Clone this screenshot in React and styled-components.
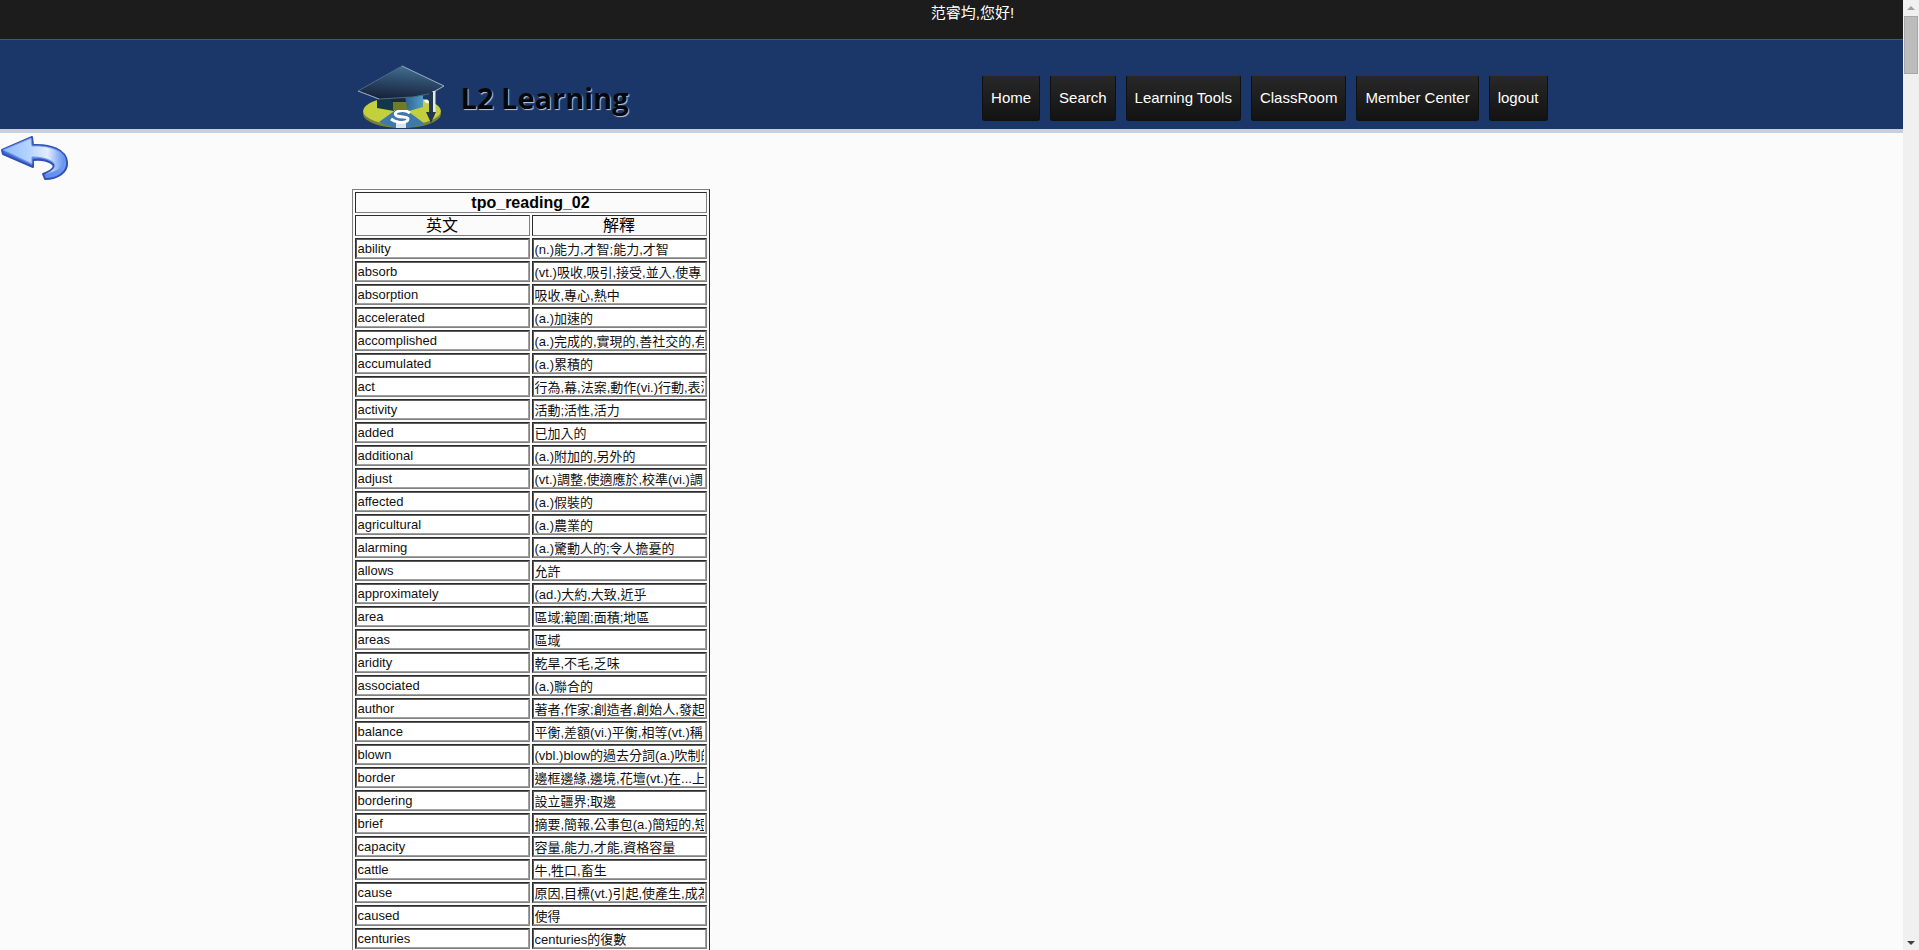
import React from "react";
import styled, { createGlobalStyle } from "styled-components";

const GlobalStyle = createGlobalStyle`
  * {
    box-sizing: border-box;
  }
  body {
    margin: 0;
    font-family: "Liberation Sans", "Noto Sans CJK TC", sans-serif;
    font-size: 16px;
    color: #000;
    background-color: #fbfbfc;
  }
`;

const Window = styled.div`
  display: flex;
  height: 100vh;
  overflow: hidden;
`;

const Page = styled.div`
  flex: 1;
  min-width: 0;
  overflow: hidden;
`;

const TopBar = styled.div`
  height: 39px;
  padding: 3px 0 0 42px;
  font-size: 15px;
  line-height: 20px;
  text-align: center;
  color: white;
  background-color: #1c1c1c;
`;

const Header = styled.header`
  height: 94px;
  border-top: 1px solid #3c5688;
  border-bottom: 4px solid #c9d0dc;
  background-color: #1b3668;
`;

const Container = styled.div`
  width: 100%;
  max-width: 1200px;
  margin: 0 auto;
`;

const HeaderInner = styled(Container)`
  display: flex;
  justify-content: space-between;
  align-items: flex-start;
`;

const Logo = styled.a`
  display: flex;
  align-items: center;
  margin-top: 24px;
  padding-left: 5px;
  gap: 16px;
  color: #05070c;
  text-decoration: none;
  font-family: "Open Sans", sans-serif;
  font-size: 29px;
  font-weight: 700;
  line-height: 64px;
  text-shadow: 1px 1px 1px #c3cbdb;
`;

const LogoText = styled.span`
  padding-top: 2px;
`;

const Menu = styled.nav`
  display: flex;
  gap: 10px;
  margin: 35px 4px 0 0;
`;

const MenuLink = styled.a`
  height: 46px;
  padding: 0 8px;
  border: 1px solid #101010;
  border-top-color: #333;
  border-radius: 3px;
  font-size: 15px;
  line-height: 44px;
  color: white;
  text-decoration: none;
  white-space: nowrap;
  background-image: linear-gradient(#282828, #131313);
`;

const BackButton = styled.button`
  display: block;
  margin-bottom: 3px;
  padding: 0;
  border: none;
  background: none;
  cursor: pointer;
`;

const WordTable = styled.table`
  width: 358px;
  border: 1px solid #808080;
  border-right-color: #2c2c2c;
  border-bottom-color: #2c2c2c;
  border-spacing: 2px;
  table-layout: fixed;
`;

const HeadCell = styled.th`
  height: 21px;
  padding: 0;
  border: 1px solid #2c2c2c;
  border-right-color: #808080;
  border-bottom-color: #808080;
  line-height: 19px;
  font-weight: ${(props) => (props.$bold ? 700 : 400)};
`;

const WordCell = styled.td`
  height: 21px;
  padding: 0;
  border: 1px solid #2c2c2c;
  border-right-color: #808080;
  border-bottom-color: #808080;
`;

const WordInput = styled.input`
  display: block;
  width: 100%;
  height: 19px;
  padding: 0 1px;
  border: 1px solid #5c5c5c;
  border-right-color: #a0a0a0;
  border-bottom-color: #a0a0a0;
  font-family: inherit;
  font-size: 13px;
  color: #111;
  background-color: white;
`;

const ScrollBar = styled.div`
  display: flex;
  flex-direction: column;
  align-items: center;
  width: 16px;
  background-color: #f0f0f0;
`;

const ScrollArrow = styled.svg`
  display: block;
  width: 16px;
  height: 16px;
`;

const ScrollThumb = styled.div`
  width: 14px;
  height: 58px;
  border: 1px solid #a8a8a8;
  background-color: #bcbcbc;
`;

const Spacer = styled.div`
  flex: 1;
`;

const menus = [
  "Home",
  "Search",
  "Learning Tools",
  "ClassRoom",
  "Member Center",
  "logout",
];

const words = [
  ["ability", "(n.)能力,才智;能力,才智"],
  ["absorb", "(vt.)吸收,吸引,接受,並入,使專"],
  ["absorption", "吸收,專心,熱中"],
  ["accelerated", "(a.)加速的"],
  ["accomplished", "(a.)完成的,實現的,善社交的,有"],
  ["accumulated", "(a.)累積的"],
  ["act", "行為,幕,法案,動作(vi.)行動,表演"],
  ["activity", "活動;活性,活力"],
  ["added", "已加入的"],
  ["additional", "(a.)附加的,另外的"],
  ["adjust", "(vt.)調整,使適應於,校準(vi.)調"],
  ["affected", "(a.)假裝的"],
  ["agricultural", "(a.)農業的"],
  ["alarming", "(a.)驚動人的;令人擔憂的"],
  ["allows", "允許"],
  ["approximately", "(ad.)大約,大致,近乎"],
  ["area", "區域;範圍;面積;地區"],
  ["areas", "區域"],
  ["aridity", "乾旱,不毛,乏味"],
  ["associated", "(a.)聯合的"],
  ["author", "著者,作家;創造者,創始人,發起"],
  ["balance", "平衡,差額(vi.)平衡,相等(vt.)稱"],
  ["blown", "(vbl.)blow的過去分詞(a.)吹制的"],
  ["border", "邊框邊緣,邊境,花壇(vt.)在...上"],
  ["bordering", "設立疆界;取邊"],
  ["brief", "摘要,簡報,公事包(a.)簡短的,短"],
  ["capacity", "容量,能力,才能,資格容量"],
  ["cattle", "牛,牲口,畜生"],
  ["cause", "原因,目標(vt.)引起,使產生,成為"],
  ["caused", "使得"],
  ["centuries", "centuries的復數"],
];

const LogoIcon = () => (
  <svg width="88" height="64" viewBox="0 0 88 64" aria-hidden="true">
    <defs>
      <linearGradient id="cap" x1="0.6" y1="0" x2="0.4" y2="1">
        <stop offset="0" stopColor="#44708f" />
        <stop offset="0.5" stopColor="#2b4666" />
        <stop offset="1" stopColor="#172238" />
      </linearGradient>
      <linearGradient id="band" x1="0" y1="0" x2="1" y2="0">
        <stop offset="0" stopColor="#2b6590" />
        <stop offset="1" stopColor="#529bc4" />
      </linearGradient>
    </defs>
    <ellipse cx="45" cy="49" rx="39" ry="14" fill="#75823a" />
    <ellipse cx="45" cy="46" rx="39" ry="14" fill="#c3cf3c" />
    <path d="M40 44 L22 57 Q42 67 68 59 L48 44Z" fill="#3d79ab" />
    <path d="M39 56h10v7H39z" fill="#d9e5ee" />
    <path
      d="M53 48C46 43 34 47 40 51C45 53 54 51 50 56C45 59 38 57 34 54"
      fill="none"
      stroke="#fff"
      strokeWidth="3"
    />
    <path d="M20 28v15l17 3V31z" fill="#123747" />
    <path d="M36 34h15v11H36z" fill="#737a25" />
    <path d="M34 31h18v6H34z" fill="#1b2b35" />
    <path d="M48 31l18-3v14l-14 4-2-3z" fill="url(#band)" />
    <path
      d="M1 26L45 1L87 21L76 28L56 32L22 34Z"
      fill="url(#cap)"
      stroke="#4d6a88"
      strokeWidth="1"
    />
    <path d="M45 1L87 21L76 27" fill="none" stroke="#91a4b8" />
    <path d="M1 26L22 34" fill="none" stroke="#91a4b8" />
    <path d="M77 26v24" stroke="#e1e8ee" strokeWidth="3" />
    <path d="M72 27h4v20h3l-5 11-5-11h3z" fill="#24384d" />
    <path d="M67 35q5-2 5 3-4 1-5-3z" fill="#f3f5f8" />
  </svg>
);

const BackIcon = () => (
  <svg width="70" height="50" viewBox="0 0 70 50" aria-hidden="true">
    <defs>
      <linearGradient id="arrow" x1="0" y1="0" x2="1" y2="0">
        <stop offset="0" stopColor="#8fbcff" />
        <stop offset="0.4" stopColor="#b3d2ff" />
        <stop offset="0.72" stopColor="#e2eeff" />
        <stop offset="1" stopColor="#5c8df0" />
      </linearGradient>
      <linearGradient id="side" x1="0" y1="0" x2="1" y2="0">
        <stop offset="0" stopColor="#3b66e0" />
        <stop offset="1" stopColor="#6f9cf5" />
      </linearGradient>
    </defs>
    <path
      d="M2 17L32 4L33 12C51 11 66 17 67 29C68 39 58 46 45 46L43 41C52 38 57 33 51 30C46 27 40 26 33 27V34L3 21Z"
      fill="url(#side)"
      stroke="#3350b4"
      strokeWidth="2"
      strokeLinejoin="round"
    />
    <path
      d="M3 17L31 5L32 13C50 12 64 18 65 26C65 34 57 39 46 41C54 37 58 32 51 28C46 25 39 24 32 24V31Z"
      fill="url(#arrow)"
      stroke="#6f97ec"
      strokeWidth="1"
    />
  </svg>
);

const App = () => {
  return (
    <Window>
      <GlobalStyle />
      <Page>
        <TopBar>范睿均,您好!</TopBar>
        <Header>
          <HeaderInner>
            <Logo href="#">
              <LogoIcon />
              <LogoText>L2 Learning</LogoText>
            </Logo>
            <Menu>
              {menus.map((menu) => (
                <MenuLink href="#" key={menu}>
                  {menu}
                </MenuLink>
              ))}
            </Menu>
          </HeaderInner>
        </Header>
        <BackButton aria-label="Back">
          <BackIcon />
        </BackButton>
        <Container>
          <WordTable>
            <thead>
              <tr>
                <HeadCell colSpan={2} $bold>
                  tpo_reading_02
                </HeadCell>
              </tr>
              <tr>
                <HeadCell>英文</HeadCell>
                <HeadCell>解釋</HeadCell>
              </tr>
            </thead>
            <tbody>
              {words.map(([word, meaning]) => (
                <tr key={word}>
                  <WordCell>
                    <WordInput aria-label="英文" defaultValue={word} />
                  </WordCell>
                  <WordCell>
                    <WordInput aria-label="解釋" defaultValue={meaning} />
                  </WordCell>
                </tr>
              ))}
            </tbody>
          </WordTable>
        </Container>
      </Page>
      <ScrollBar>
        <ScrollArrow viewBox="0 0 16 16">
          <path d="M4 10L8 6L12 10Z" fill="#a0a0a0" />
        </ScrollArrow>
        <ScrollThumb />
        <Spacer />
        <ScrollArrow viewBox="0 0 16 16">
          <path d="M4 7L8 11L12 7Z" fill="#404040" />
        </ScrollArrow>
      </ScrollBar>
    </Window>
  );
};

export default App;
